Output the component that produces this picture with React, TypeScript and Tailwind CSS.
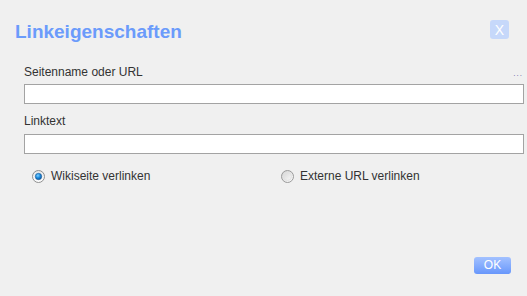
import React from "react";

function RadioOn() {
  return (
    <svg width="13" height="13" viewBox="0 0 13 13">
      <defs>
        <linearGradient id="rg1" x1="0" y1="0" x2="0" y2="1">
          <stop offset="0" stopColor="#e6e6e6" />
          <stop offset="1" stopColor="#ffffff" />
        </linearGradient>
        <radialGradient id="rd1" cx="0.4" cy="0.35" r="0.7">
          <stop offset="0" stopColor="#7fd0ff" />
          <stop offset="0.5" stopColor="#1c8de0" />
          <stop offset="1" stopColor="#0a4f95" />
        </radialGradient>
      </defs>
      <circle cx="6.5" cy="6.5" r="6" fill="url(#rg1)" stroke="#8e8f8f" strokeWidth="1" />
      <circle cx="6.5" cy="6.5" r="3.2" fill="url(#rd1)" stroke="#1f5c99" strokeWidth="0.6" />
    </svg>
  );
}

function RadioOff() {
  return (
    <svg width="13" height="13" viewBox="0 0 13 13">
      <defs>
        <linearGradient id="rg2" x1="0" y1="0" x2="1" y2="1">
          <stop offset="0" stopColor="#d0d0d0" />
          <stop offset="1" stopColor="#ffffff" />
        </linearGradient>
      </defs>
      <circle cx="6.5" cy="6.5" r="6" fill="url(#rg2)" stroke="#9a9a9a" strokeWidth="1" />
      <circle cx="6.5" cy="6.5" r="4" fill="none" stroke="#e2e2e2" strokeWidth="1" />
    </svg>
  );
}

export default function App() {
  return (
    <div
      className="w-[527px] h-[296px] bg-[#f0f0f0] flex flex-col text-[#333333]"
      style={{ fontFamily: '"Liberation Sans", Arial, sans-serif' }}
    >
      <div className="flex justify-between items-start pt-[20px] pl-[15px] pr-[18px]">
        <h1 className="mt-[1px] text-[19px] leading-[22px] font-bold text-[#6b9bfb]">
          Linkeigenschaften
        </h1>
        <div className="w-[19px] h-[19px] rounded-[3px] bg-[#c6d8fa] flex items-center justify-center text-white text-[14px] leading-none">
          X
        </div>
      </div>

      <div className="pl-[24px] pr-[3px] mt-[22px]">
        <div className="flex justify-between items-end h-[14px]">
          <span className="text-[12px] leading-[14px]">Seitenname oder URL</span>
          <span className="text-[8px] leading-[8px] mr-[1px] mb-[1px] tracking-[1px] text-[#6060a0]">...</span>
        </div>
        <div className="mt-[5px] h-[20px] bg-white border border-[#a3a3a3]" />

        <div className="mt-[10px] text-[12px] leading-[14px]">Linktext</div>
        <div className="mt-[6px] h-[20px] bg-white border border-[#a3a3a3]" />

        <div className="mt-[15px] grid grid-cols-2 text-[12px] leading-[14px]">
          <div className="flex items-center gap-[6px] pl-[8px]">
            <RadioOn />
            <span>Wikiseite verlinken</span>
          </div>
          <div className="flex items-center gap-[6px] pl-[7px]">
            <RadioOff />
            <span>Externe URL verlinken</span>
          </div>
        </div>
      </div>

      <div className="mt-auto flex justify-end pr-[16px] pb-[22px]">
        <div className="w-[37px] h-[17px] rounded-[3px] bg-gradient-to-b from-[#a3c1ff] to-[#6897fb] text-white text-[12px] leading-[17px] text-center">
          OK
        </div>
      </div>
    </div>
  );
}
